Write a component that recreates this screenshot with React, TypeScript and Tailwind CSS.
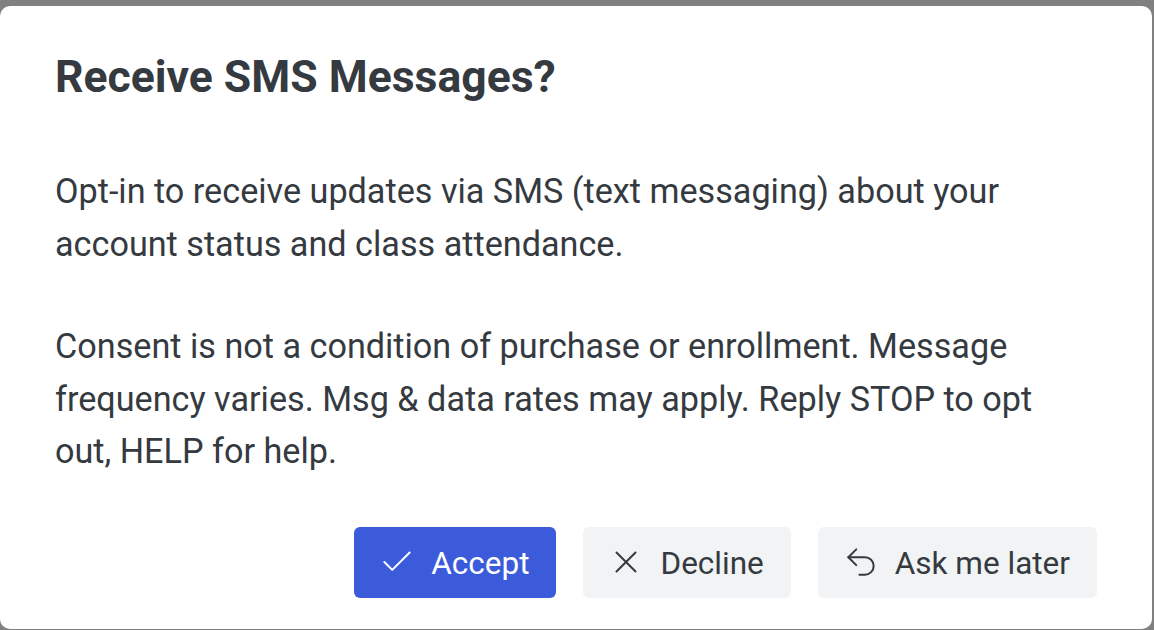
import { Check, X, Undo2 } from "lucide-react";

export default function App() {
  return (
    <div className="h-[630px] w-full bg-[#808080] pt-[6px] pr-[2px] pb-[1px] font-['Roboto',sans-serif]">
      <div className="h-full rounded-[10px] bg-white pl-[55px] pr-[55px] pt-[44px] text-[#343a40]">
        <h2 className="text-[44.5px] font-bold leading-[54px] text-[#343a40]">Receive SMS Messages?</h2>
        <p className="mt-[61px] text-[34.2px] leading-[52.5px]">
          Opt-in to receive updates via SMS (text messaging) about your
          <br />
          account status and class attendance.
        </p>
        <p className="mt-[50px] text-[34.2px] leading-[52.5px]">
          Consent is not a condition of purchase or enrollment. Message
          <br />
          frequency varies. Msg &amp; data rates may apply. Reply STOP to opt
          <br />
          out, HELP for help.
        </p>
        <div className="mt-[49px] flex justify-end gap-[27px]">
          <button className="flex h-[71px] items-center gap-[15px] rounded-[6px] bg-[#3b5bdb] pl-6 pr-[27px] text-[31.5px] text-white">
            <Check size={38} strokeWidth={1.25} />
            <span className="pt-[4px]">Accept</span>
          </button>
          <button className="flex h-[71px] items-center gap-[15px] rounded-[6px] bg-[#f1f3f5] pl-6 pr-[27px] text-[31.5px] text-[#343a40]">
            <X size={38} strokeWidth={1.25} />
            <span className="pt-[4px]">Decline</span>
          </button>
          <button className="flex h-[71px] items-center gap-[15px] rounded-[6px] bg-[#f1f3f5] pl-6 pr-[27px] text-[31.5px] text-[#343a40]">
            <Undo2 size={38} strokeWidth={1.25} />
            <span className="pt-[4px]">Ask me later</span>
          </button>
        </div>
      </div>
    </div>
  );
}
